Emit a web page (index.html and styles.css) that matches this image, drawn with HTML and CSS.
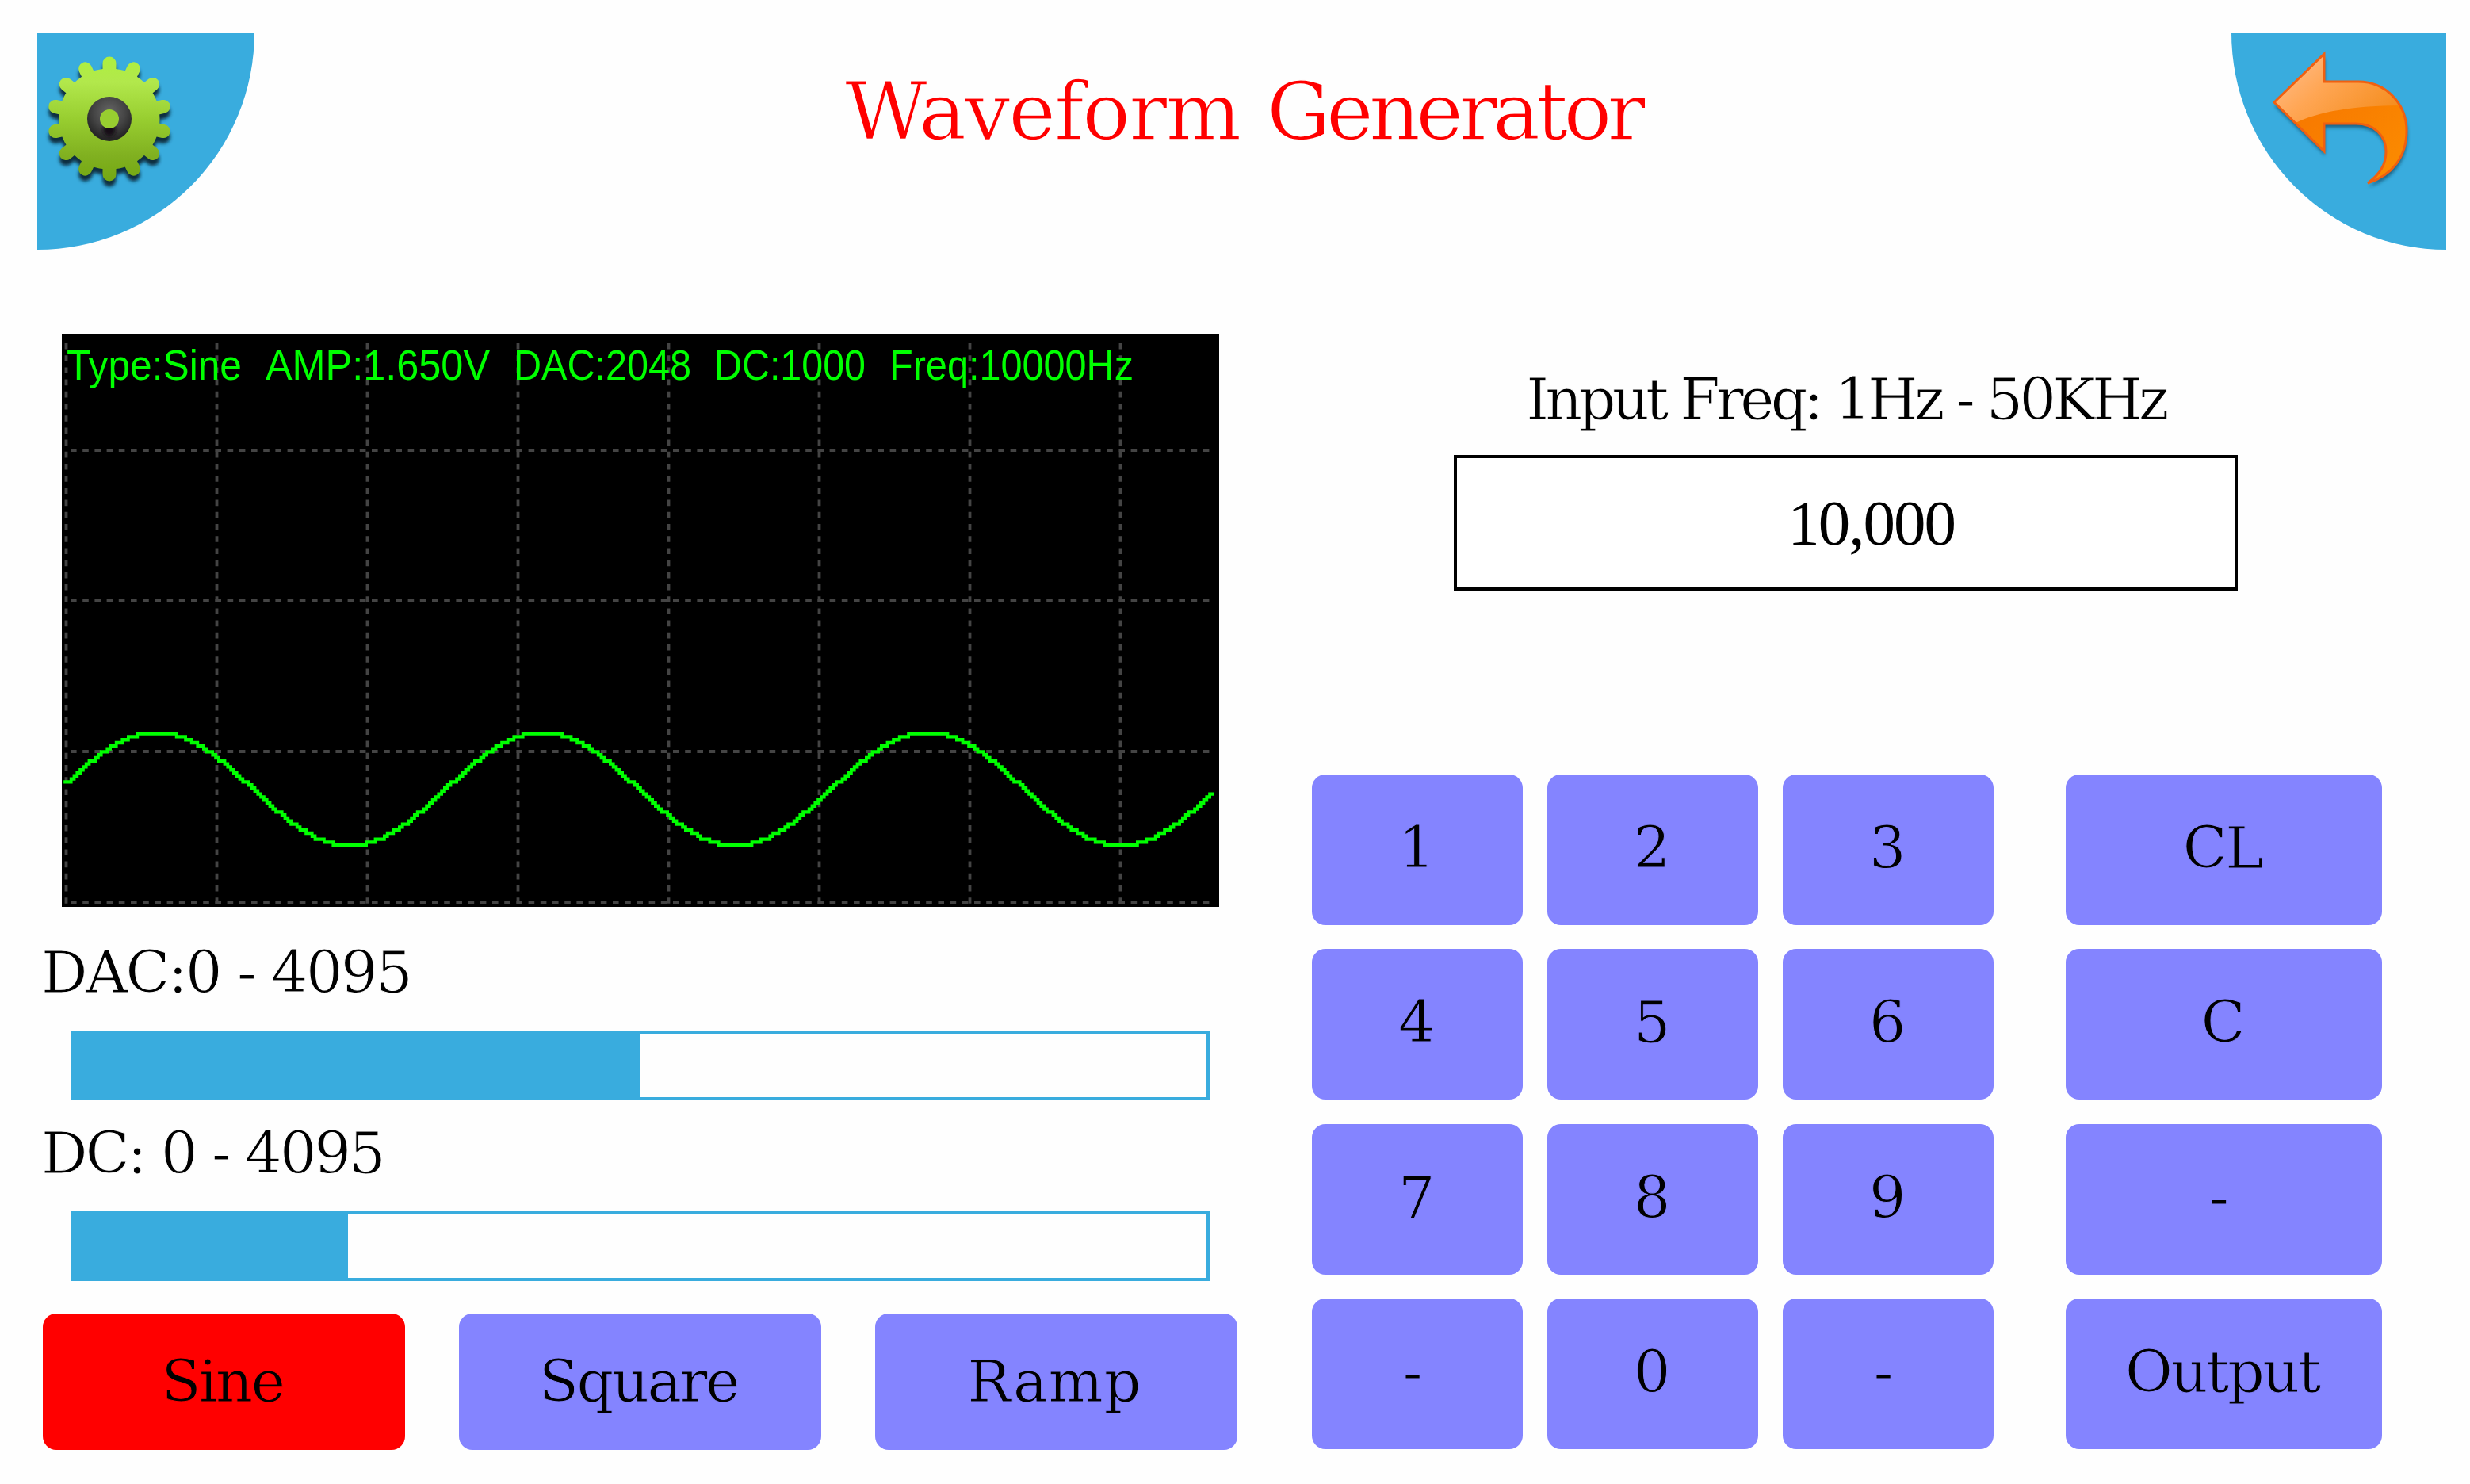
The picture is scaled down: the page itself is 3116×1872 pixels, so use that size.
FILE: index.html
```html
<!DOCTYPE html>
<html lang="en">

<head>
    <meta charset="UTF-8" />
    <title>Waveform Generator</title>
    <link rel="stylesheet" href="styles.css">
</head>

<body>
    <header>
        <a class="corner corner-left">
            <svg viewBox="0 0 274 274">
                <defs>
                    <linearGradient id="gearFill" gradientUnits="userSpaceOnUse" x1="0" y1="-78" x2="0" y2="78">
                        <stop offset="0" stop-color="#aef03e" />
                        <stop offset="0.2" stop-color="#b2e84c" />
                        <stop offset="0.5" stop-color="#98ce30" />
                        <stop offset="0.8" stop-color="#80b020" />
                        <stop offset="1" stop-color="#74a812" />
                    </linearGradient>
                    <radialGradient id="hubFill" cx="0.5" cy="0.35" r="0.6">
                        <stop offset="0" stop-color="#666" />
                        <stop offset="0.6" stop-color="#444" />
                        <stop offset="1" stop-color="#262626" />
                    </radialGradient>
                    <filter id="soft" x="-20%" y="-20%" width="140%" height="140%">
                        <feGaussianBlur stdDeviation="2" />
                    </filter>
                    <g id="gear">
                        <circle r="55" />
                        <path d="M0 -70V70M30.4 -63.1L-30.4 63.1M-30.4 -63.1L30.4 63.1M54.7 -43.6L-54.7 43.6M-54.7 -43.6L54.7 43.6M68.2 -15.6L-68.2 15.6M-68.2 -15.6L68.2 15.6" />
                    </g>
                </defs>
                <use href="#gear" class="gear-shadow" x="91" y="116" filter="url(#soft)" />
                <g transform="translate(91 109)">
                    <use href="#gear" class="gear" />
                    <circle r="28" fill="url(#hubFill)" />
                    <circle cy="14" r="8" fill="#151015" filter="url(#soft)" />
                    <circle r="12" fill="#98ce30" />
                </g>
            </svg>
        </a>
        <h1><span class="word-wide">Waveform</span> <span class="word-tight">Generator</span></h1>
        <a class="corner corner-right">
            <svg viewBox="0 0 271 274">
                <defs>
                    <linearGradient id="arrowFill" x1="0" y1="0" x2="1" y2="1">
                        <stop offset="0" stop-color="#f46a00" />
                        <stop offset="0.5" stop-color="#f98000" />
                        <stop offset="1" stop-color="#ff9a00" />
                    </linearGradient>
                    <linearGradient id="arrowShine" x1="0" y1="0" x2="1" y2="0.6">
                        <stop offset="0" stop-color="#ffc49c" />
                        <stop offset="0.5" stop-color="#ffa654" />
                        <stop offset="1" stop-color="#f58e20" />
                    </linearGradient>
                    <clipPath id="arrowClip">
                        <path d="M54 88L117 27V62H160C195 62 221 90 221 124C221 157 203 180 172 190C188 178 195 166 195 150C195 130 180 115 157 115H117V150Z" />
                    </clipPath>
                </defs>
                <path class="arrow-shadow" filter="url(#soft)" d="M54 88L117 27V62H160C195 62 221 90 221 124C221 157 203 180 172 190C188 178 195 166 195 150C195 130 180 115 157 115H117V150Z" />
                <g clip-path="url(#arrowClip)">
                    <rect width="271" height="274" fill="url(#arrowFill)" />
                    <path d="M50 20H225V92C170 92 120 96 83 113H50Z" fill="url(#arrowShine)" />
                </g>
                <path class="arrow-edge" d="M54 88L117 27V62H160C195 62 221 90 221 124C221 157 203 180 172 190C188 178 195 166 195 150C195 130 180 115 157 115H117V150Z" />
            </svg>
        </a>
    </header>

    <main>
        <section class="left">
            <svg class="scope" viewBox="78 421 1460 723">
                <rect x="78" y="421" width="1460" height="723" />
                <path class="grid" d="M83.5 433V1140M273.5 433V1140M463.5 433V1140M653.5 433V1140M843.5 433V1140M1033.5 433V1140M1223.5 433V1140M1413.5 433V1140" />
                <path class="grid" d="M89 568H1529M89 758H1529M89 948H1529M89 1138H1529" />
                <text x="84" y="479" textLength="221" lengthAdjust="spacingAndGlyphs">Type:Sine</text>
                <text x="335" y="479" textLength="283" lengthAdjust="spacingAndGlyphs">AMP:1.650V</text>
                <text x="648" y="479" textLength="224" lengthAdjust="spacingAndGlyphs">DAC:2048</text>
                <text x="901" y="479" textLength="191" lengthAdjust="spacingAndGlyphs">DC:1000</text>
                <text x="1122" y="479" textLength="308" lengthAdjust="spacingAndGlyphs">Freq:10000Hz</text>
                <path id="trace" class="trace" />
            </svg>

            <label>DAC:0 - 4095</label>
            <div class="slider"><div class="fill" style="width: 50%"></div></div>

            <label>DC: 0 - 4095</label>
            <div class="slider"><div class="fill" style="width: 24.2%"></div></div>

            <div class="waves">
                <button class="active">Sine</button>
                <button>Square</button>
                <button class="ramp">Ramp</button>
            </div>
        </section>

        <section class="right">
            <p class="hint">Input Freq: 1Hz - 50KHz</p>
            <div class="freq">10,000</div>
            <div class="keypad">
                <button>1</button>
                <button>2</button>
                <button>3</button>
                <button class="wide">CL</button>
                <button>4</button>
                <button>5</button>
                <button>6</button>
                <button class="wide">C</button>
                <button>7</button>
                <button>8</button>
                <button>9</button>
                <button class="wide dash">-</button>
                <button class="dash">-</button>
                <button>0</button>
                <button class="dash">-</button>
                <button class="wide">Output</button>
            </div>
        </section>
    </main>

    <script>
        // the display has coarse pixels, so the sine is drawn in steps
        const px = 3.8;
        let d = '';
        for (let i = 0; i < 381; i++) {
            const v = 18.8 - 18.9 * Math.cos(2 * Math.PI * (i - 30) / 128);
            const level = Math.max(0, Math.floor(v));
            d += `M${(80.2 + i * px).toFixed(1)} ${(925.6 + level * px).toFixed(1)}h${2 * px}`;
        }
        document.getElementById('trace').setAttribute('d', d);
    </script>
</body>

</html>
```
FILE: styles.css
```css
* {
    box-sizing: border-box;
}

body {
    margin: 0;
    padding: 41px 30px 0 47px;
    background-color: #fefefe;
    color: #000;
    font-family: "DejaVu Serif", serif;
    font-size: 73px;
    letter-spacing: -2.4px;
    -webkit-text-stroke: 1px #fefefe;
}

header {
    display: flex;
    justify-content: space-between;
    height: 274px;
}

h1 {
    margin: 50px 0 0;
    font-size: 101px;
    font-weight: normal;
    line-height: 100px;
    color: #ff0000;
    -webkit-text-stroke-width: 1.5px;
}

.word-wide {
    letter-spacing: -2px;
}

.word-tight {
    margin-left: 4px;
    letter-spacing: -5.7px;
}

.corner {
    width: 274px;
    height: 274px;
    background-color: #39acde;
}

.corner svg {
    display: block;
    width: 100%;
    height: 100%;
}

.corner-left {
    border-bottom-right-radius: 100%;
}

.corner-right {
    width: 271px;
    border-bottom-left-radius: 100%;
}

.gear {
    fill: url(#gearFill);
    stroke: url(#gearFill);
    stroke-width: 17px;
    stroke-linecap: round;
}

.gear-shadow {
    fill: #0b2f40;
    stroke: #0b2f40;
    stroke-width: 17px;
    stroke-linecap: round;
}

.arrow-shadow {
    fill: #1f6485;
    transform: translate(1px, 5px);
}

.arrow-edge {
    fill: none;
    stroke: #f06010;
    stroke-width: 3px;
}

main {
    display: flex;
    gap: 94px;
    padding: 106px 0 0 7px;
}

.left {
    width: 1507px;
}

.scope {
    display: block;
    width: 1460px;
    height: 723px;
    margin-left: 24px;
}

.grid {
    fill: none;
    stroke: #444;
    stroke-width: 3.8px;
    stroke-dasharray: 7.6 7.6;
}

.trace {
    fill: none;
    stroke: #00ff00;
    stroke-width: 4.4px;
}

.scope text {
    font-family: "Liberation Sans", sans-serif;
    font-size: 54px;
    letter-spacing: 0;
    fill: #00ff00;
    -webkit-text-stroke: 0.8px #000;
}

label {
    display: block;
    height: 84px;
    line-height: 84px;
    margin: 41px 0 0 -2px;
    white-space: pre;
}

.slider {
    width: 1437px;
    height: 88px;
    margin: 31px 0 0 35px;
    border: 4px solid #39acde;
}

.slider + label {
    margin-top: 25px;
    letter-spacing: -2.8px;
}

.fill {
    height: 100%;
    background-color: #39acde;
}

.waves {
    display: flex;
    gap: 68px;
    margin-top: 41px;
}

button {
    padding: 0 4px 5px 0;
    border: none;
    border-radius: 17px;
    background-color: #8484ff;
    color: #000;
    font: inherit;
    letter-spacing: inherit;
    -webkit-text-stroke: 1px #8484ff;
}

.waves button {
    width: 457px;
    height: 172px;
    padding-bottom: 1px;
}

.waves .active {
    background-color: #ff0000;
    -webkit-text-stroke-color: #ff0000;
}

.waves .ramp {
    letter-spacing: 1px;
}

.right {
    width: 1351px;
}

.hint {
    width: 989px;
    height: 84px;
    line-height: 84px;
    margin: 41px 0 0 179px;
    letter-spacing: -4.7px;
    text-align: center;
    white-space: nowrap;
}

.freq {
    display: flex;
    align-items: center;
    justify-content: center;
    width: 989px;
    height: 171px;
    margin: 28px 0 0 179px;
    padding: 2px 0 0 64px;
    border: 4px solid #000;
    background-color: #fff;
    font-family: "Liberation Serif", serif;
    font-size: 81px;
    letter-spacing: -2px;
    -webkit-text-stroke: 0;
}

.keypad {
    display: grid;
    grid-template-columns: 266px 266px 266px 399px;
    grid-template-rows: repeat(4, 190px);
    column-gap: 31px;
    row-gap: 30.4px;
    margin-top: 232px;
}

.wide {
    width: 399px;
    margin-left: 60px;
}

.dash {
    padding-right: 14px;
}
```
